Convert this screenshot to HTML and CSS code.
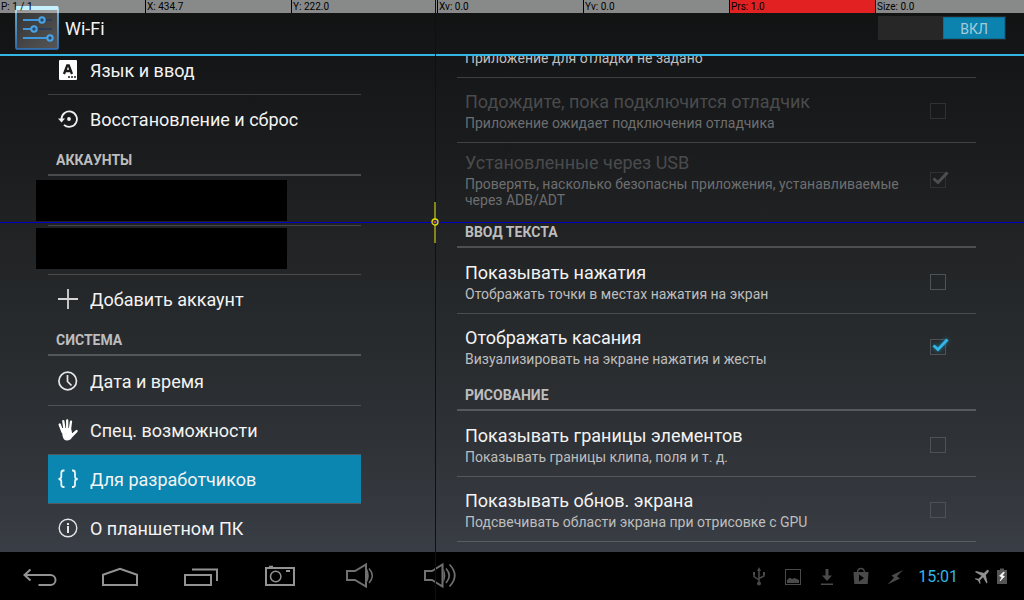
FILE: index.html
```html
<!DOCTYPE html>
<html lang="ru">
<head>
<meta charset="utf-8">
<meta name="viewport" content="width=device-width, initial-scale=1">
<title>Wi-Fi</title>
<link rel="stylesheet" href="styles.css">
</head>
<body>
<div class="screen">
  <header class="action-bar">
    <svg class="app-icon" viewBox="0 0 44 44" aria-hidden="true">
      <defs>
        <linearGradient id="tile" x1="0" y1="0" x2="1" y2="1"><stop offset="0" stop-color="#333"/><stop offset="1" stop-color="#565656"/></linearGradient>
        <linearGradient id="edge" x1="0" y1="0" x2="0" y2="1"><stop offset="0" stop-color="#7fd0f2"/><stop offset="1" stop-color="#2f78c4"/></linearGradient>
      </defs>
      <rect x="1" y="1" width="42" height="42" rx="1" fill="url(#tile)" stroke="url(#edge)" stroke-width="1.6"/>
      <path d="M1 2H43" stroke="#8be0ff" stroke-width="4"/>
      <g fill="none" stroke="#1f3d60" stroke-width="1.500"><path d="M30 14H37M22 23H37"/></g>
      <g fill="none" stroke="#3f97dc" stroke-width="1.900"><path d="M8 14H24M8 23H16M8 32H32"/></g>
      <g fill="#2a4a66" stroke="#4aa3e6" stroke-width="2"><circle cx="27" cy="14" r="2.700"/><circle cx="19" cy="23" r="2.700"/><circle cx="35" cy="32" r="2.700"/></g>
    </svg>
    <h1 class="action-bar__title">Wi-Fi</h1>
    <button class="switch" type="button" role="switch" aria-checked="true"><span class="switch__thumb">ВКЛ</span></button>
  </header>

  <main class="panes">
    <nav class="sidebar">
      <a class="nav-row" href="#language">
        <svg class="icon" viewBox="0 0 20 20"><rect x="1" y="0" width="18" height="20" rx="1" fill="#fff"/><path d="M6 14L9.200 5.500H10.800L14 14M7.500 11H12.500" fill="none" stroke="#1b1b1b" stroke-width="2.300"/><path d="M10 17H12M13 17H15M16 17H18" stroke="#1b1b1b" stroke-width="1.500"/></svg>
        <span class="nav-row__label">Язык и ввод</span></a>
      <a class="nav-row" href="#backup">
        <svg class="icon" viewBox="0 0 20 20"><path d="M3.500 10A7.700 7.700 0 1 1 6 15.800" fill="none" stroke="#f0f0f0" stroke-width="1.800"/><path d="M0 9.500H7L3.500 13.500Z" fill="#f0f0f0"/><circle cx="11" cy="10" r="1.900" fill="#f0f0f0"/></svg>
        <span class="nav-row__label">Восстановление и сброс</span></a>
      <h2 class="section">АККАУНТЫ</h2>
      <div class="nav-row nav-row--masked nav-row--first"><span class="mask"></span></div>
      <div class="nav-row nav-row--masked"><span class="mask"></span></div>
      <a class="nav-row" href="#add">
        <svg class="icon" viewBox="0 0 20 20"><path d="M10 0V20M0 10H20" stroke="#d5d5d5" stroke-width="1.800"/></svg>
        <span class="nav-row__label">Добавить аккаунт</span></a>
      <h2 class="section">СИСТЕМА</h2>
      <a class="nav-row nav-row--first" href="#date">
        <svg class="icon" viewBox="0 0 20 20"><circle cx="9.700" cy="10" r="8.800" fill="none" stroke="#e6e6e6" stroke-width="1.700"/><path d="M9.500 4V10.500L13.500 14.500" fill="none" stroke="#e6e6e6" stroke-width="1.700"/></svg>
        <span class="nav-row__label">Дата и время</span></a>
      <a class="nav-row" href="#accessibility">
        <svg class="icon icon--tall" viewBox="0 0 20 22"><g fill="none" stroke="#fff" stroke-width="2.300" stroke-linecap="round"><path d="M1.700 5.500L4.500 13M5.300 2.200L6.600 11M9.200 1.300V11M13 2.700L11.800 11M18.600 12L14 16"/></g><path d="M3.400 9H13L14.200 14.500L18 11.500L19.300 13L14 18.500Q12.500 21.500 9 21.500Q5.500 21.500 4.600 17Z" fill="#fff"/></svg>
        <span class="nav-row__label">Спец. возможности</span></a>
      <a class="nav-row nav-row--active" href="#developer" aria-current="page">
        <svg class="icon" viewBox="0 0 20 20"><g fill="none" stroke="#e8f4f8" stroke-width="1.800"><path d="M6.500 1.500H5.500Q3.300 1.500 3.300 4V7.500Q3.300 10 .5 10Q3.300 10 3.300 12.500V15.500Q3.300 18 5.500 18H6.500M14 1.500H15Q17 1.500 17 4V7.500Q17 10 19.700 10Q17 10 17 12.500V15.500Q17 18 15 18H14"/></g></svg>
        <span class="nav-row__label">Для разработчиков</span></a>
      <a class="nav-row" href="#about">
        <svg class="icon" viewBox="0 0 20 20"><circle cx="10" cy="10" r="8.800" fill="none" stroke="#e6e6e6" stroke-width="1.400"/><path d="M10 8V15M10 5V7" stroke="#e6e6e6" stroke-width="2"/></svg>
        <span class="nav-row__label">О планшетном ПК</span></a>
    </nav>

    <section class="settings">
      <div class="pref pref--cut"><span class="pref__summary">Приложение для отладки не задано</span></div>
      <label class="pref pref--disabled">
        <span class="pref__text"><span class="pref__title">Подождите, пока подключится отладчик</span><span class="pref__summary">Приложение ожидает подключения отладчика</span></span>
        <span class="tick"><input class="tick__box" type="checkbox" disabled></span></label>
      <label class="pref pref--disabled">
        <span class="pref__text"><span class="pref__title">Установленные через USB</span><span class="pref__summary">Проверять, насколько безопасны приложения, устанавливаемые через ADB/ADT</span></span>
        <span class="tick"><input class="tick__box" type="checkbox" checked disabled><svg class="tick__mark" viewBox="0 0 20 16"><path d="M3.500 6.500L8 10.500L17.500 .5"/></svg></span></label>
      <h2 class="section">ВВОД ТЕКСТА</h2>
      <label class="pref pref--first">
        <span class="pref__text"><span class="pref__title">Показывать нажатия</span><span class="pref__summary">Отображать точки в местах нажатия на экран</span></span>
        <span class="tick"><input class="tick__box" type="checkbox"></span></label>
      <label class="pref">
        <span class="pref__text"><span class="pref__title">Отображать касания</span><span class="pref__summary">Визуализировать на экране нажатия и жесты</span></span>
        <span class="tick"><input class="tick__box" type="checkbox" checked><svg class="tick__mark" viewBox="0 0 20 16"><path d="M3.500 6.500L8 10.500L17.500 .5"/></svg></span></label>
      <h2 class="section">РИСОВАНИЕ</h2>
      <label class="pref pref--first">
        <span class="pref__text"><span class="pref__title">Показывать границы элементов</span><span class="pref__summary">Показывать границы клипа, поля и т. д.</span></span>
        <span class="tick"><input class="tick__box" type="checkbox"></span></label>
      <label class="pref pref--last">
        <span class="pref__text"><span class="pref__title">Показывать обнов. экрана</span><span class="pref__summary">Подсвечивать области экрана при отрисовке с GPU</span></span>
        <span class="tick"><input class="tick__box" type="checkbox"></span></label>
    </section>
  </main>

  <footer class="system-bar">
    <button class="key" type="button" aria-label="Назад"><svg viewBox="0 0 40 32"><path d="M10.500 9.500L4.500 15L10.500 20.500M4.500 15H30.500a5 5 0 0 1 0 10H18.500"/></svg></button>
    <button class="key" type="button" aria-label="Домой"><svg viewBox="0 0 40 32"><path d="M3 25V14.800L20 8.800L37 14.800V25Z"/></svg></button>
    <button class="key" type="button" aria-label="Недавние"><svg viewBox="0 0 40 32"><path d="M5 15H31V25H5ZM12 9.500H37V21"/></svg></button>
    <button class="key" type="button" aria-label="Снимок экрана"><svg viewBox="0 0 40 32"><path d="M6 8H34V25H6Z"/><path d="M9 6.700H13M26 11H30"/><circle cx="15.700" cy="16.500" r="5.200" stroke-width="1.500"/></svg></button>
    <button class="key key--dim" type="button" aria-label="Тише"><svg viewBox="0 0 40 32"><path d="M7 11H15L26 4.500V26.500L15 20H7Z"/><path d="M27 8.500Q30.500 15.500 27 22.500Z" fill="#707070" stroke="none"/><path d="M29 8.500Q35.500 15.500 29 23" stroke-width="1.500"/></svg></button>
    <button class="key key--dim" type="button" aria-label="Громче"><svg viewBox="0 0 40 32"><path d="M5 11H12L22.500 4.500V26.500L12 20H5Z"/><path d="M23.500 8.500Q27 15.500 23.500 22.500Z" fill="#707070" stroke="none"/><path d="M26 8.500Q32.500 15.500 26 23M29.500 4.500Q40 15.500 29.500 26.500" stroke-width="1.700"/></svg></button>

    <div class="status">
      <svg viewBox="0 0 20 20" fill="none" stroke="#4a4a4a" stroke-width="1.500"><path d="M10 3V17M5 6V9.500L10 13M15 6V9L10 11.500"/><path d="M10 0L12 4H8ZM4 5H6V8H4ZM14 5H16V8H14Z" fill="#4a4a4a" stroke="none"/><circle cx="10" cy="16.500" r="2" fill="#4a4a4a" stroke="none"/></svg>
      <svg viewBox="0 0 20 20"><rect x="2.500" y="2.500" width="15" height="15" fill="none" stroke="#4a4a4a"/><path d="M4 16V13L7 10.500L9 12L11.500 11L16 13V16Z" fill="#4a4a4a"/></svg>
      <svg viewBox="0 0 20 20"><path d="M8.500 2H11.500V8.500H15L10 14L5 8.500H8.500ZM4 16.500H16V18H4Z" fill="#4a4a4a"/></svg>
      <svg viewBox="0 0 20 20"><path d="M2.500 5H17.500L16.700 17H3.300Z" fill="#4a4a4a"/><path d="M6.500 5Q7 1.500 10 1.500Q13 1.500 13.500 5" fill="none" stroke="#4a4a4a" stroke-width="1.300"/><path d="M8 7.500L13 11L8 14.500Z" fill="#000"/></svg>
      <svg viewBox="0 0 20 20"><path d="M18 3L6.500 8.500L9 10.700L2.500 17.500L15 11.500L12 9.300Z" fill="#4a4a4a"/></svg>
      <time class="status__clock">15:01</time>
      <svg viewBox="0 0 20 20"><path d="M16.500 3Q15.500 2.500 14.500 3.500L12 6L4 4L3 5L9.500 8.700L6.500 11.800L3.500 11.300L2.800 12L6 13.500L7.800 17L8.500 16.300L8 13.300L11 10.300L14.500 16.500L15.500 15.500L13.800 8L16.200 5.500Q17.200 4.300 16.500 3Z" fill="#8f8f8f"/></svg>
      <svg viewBox="0 0 20 20"><path d="M8 1.500H12V3H15V17H5V3H8Z" fill="#555"/><path d="M11.500 5L7.500 9L10 10L8 14L12.500 9.500L10.200 8.500L12.500 5.500Z" fill="#fff" stroke="#fff" stroke-width=".6"/></svg>
    </div>
  </footer>

  <div class="pointer">
    <div class="pointer__bar">
      <span>P: 1 / 1</span><span>X: 434.7</span><span>Y: 222.0</span><span>Xv: 0.0</span><span>Yv: 0.0</span><span class="pointer__pressure">Prs: 1.0</span><span>Size: 0.0</span>
    </div>
    <i class="pointer__x"></i>
    <i class="pointer__y"></i>
    <svg class="pointer__spot" viewBox="0 0 10 42"><path d="M5 1V42" stroke="#85851c" stroke-width="2"/><circle cx="5" cy="21" r="3" fill="#30305a" stroke="#e0e000" stroke-width="1.300"/><circle cx="5" cy="21" r="1" fill="#ff5050"/></svg>
  </div>
</div>
</body>
</html>
```

FILE: styles.css
```css
* { box-sizing: border-box; }

body {
  margin: 0;
  font-family: Roboto, "Noto Sans", sans-serif;
  color: #f3f3f3;
  background: #000;
}

.screen {
  position: relative;
  display: flex;
  flex-direction: column;
  height: 100vh;
  overflow: hidden;
  background: linear-gradient(#111212, #1c1d1f 28%, #26292b 52%, #2f3236 74%, #393d45 92%);
}

/* Action bar */
.action-bar {
  display: flex;
  align-items: center;
  flex: none;
  height: 56px;
  padding: 2px 18px 0 15px;
  border-bottom: 2px solid #33b5e5;
}
.app-icon { width: 44px; height: 44px; }
.action-bar__title {
  flex: 1;
  margin: 2px 0 0 6px;
  font-size: 18px;
  line-height: 24px;
  font-weight: 400;
}
.switch {
  display: flex;
  justify-content: flex-end;
  width: 128px;
  height: 24px;
  padding: 1px;
  border: 0;
  background: #272727;
  font: inherit;
}
.switch__thumb {
  width: 62px;
  border: 1px solid #0a6f94;
  background: #0b83ae;
  color: #a6cbd8;
  font-size: 14px;
  line-height: 22px;
  text-align: center;
}

/* Two panes */
.panes {
  display: flex;
  flex: 1;
  gap: 96px;
  min-height: 0;
  padding: 0 48px;
  overflow: hidden;
}
.sidebar { flex: 313 1 0; min-width: 0; margin-top: -11px; }
.settings { flex: 519 1 0; min-width: 0; margin-top: -6px; }

.section {
  height: 33px;
  margin: 0;
  padding: 6px 8px 0;
  border-bottom: 2px solid rgba(255, 255, 255, .2);
  color: #bdbdbd;
  font-size: 14px;
  line-height: 22px;
  font-weight: 700;
}

.nav-row {
  display: flex;
  align-items: center;
  gap: 12px;
  height: 49px;
  padding: 0 10px;
  border-top: 1px solid rgba(255, 255, 255, .17);
  color: inherit;
  font-size: 18px;
  line-height: 24px;
  text-decoration: none;
}
.nav-row__label { padding-top: 2px; }
.nav-row--active { background: #0b86b1; background-clip: padding-box; }
.nav-row--masked { align-items: flex-start; padding: 2px 0 0; }
.nav-row--first { border-top-color: transparent; }
.nav-row--masked.nav-row--first { padding-top: 3px; }
.mask { width: 251px; height: 41px; margin-left: -12px; background: #000; }
.icon { flex: none; width: 20px; height: 20px; }
.icon--tall { height: 22px; }

.pref {
  display: flex;
  align-items: center;
  min-height: 65px;
  padding: 8px 28px 7px 8px;
  border-top: 1px solid rgba(255, 255, 255, .17);
}
.pref--first { border-top-color: transparent; }
.pref--last { min-height: 66px; border-bottom: 1px solid rgba(255, 255, 255, .17); }
.pref--cut { min-height: 0; padding: 0 8px 11px; border-top: 0; }
.pref__text { flex: 1; min-width: 0; padding-right: 30px; }
.pref__title, .pref__summary { display: block; }
.pref__title { font-size: 18px; line-height: 24px; }
.pref__summary { color: #bebebe; font-size: 14px; line-height: 16px; }
.pref__title + .pref__summary { margin-top: 1px; }
.pref--disabled .pref__title { color: #4a4b4c; }
.pref--disabled .pref__summary { color: #6d6e6f; }

.tick { position: relative; display: flex; width: 18px; height: 16px; }
.tick__box {
  appearance: none;
  width: 16px;
  height: 16px;
  margin: 0;
  border: 1px solid #4f5254;
}
.tick__mark {
  position: absolute;
  top: 0;
  left: 0;
  width: 20px;
  height: 16px;
  overflow: visible;
  fill: none;
  stroke: #33b5e5;
  stroke-width: 3;
  filter: drop-shadow(0 0 2px #1680a8);
  pointer-events: none;
}
.pref--disabled .tick__box { border-color: #303132; }
.pref--disabled .tick__mark { stroke: #4d4e4f; filter: none; }

/* System bar */
.system-bar {
  display: flex;
  align-items: center;
  flex: none;
  height: 48px;
  background: #000;
}
.key {
  display: flex;
  align-items: center;
  justify-content: center;
  width: 80px;
  height: 48px;
  padding: 0;
  border: 0;
  background: none;
}
.key svg {
  width: 40px;
  height: 32px;
  fill: none;
  stroke: #939393;
  stroke-width: 2;
}
.key--dim svg { stroke: #707070; }
.status {
  display: flex;
  align-items: center;
  gap: 14px;
  margin-left: auto;
  padding: 2px 12px 0 0;
}
.status svg { width: 20px; height: 20px; }
.status__clock { margin-left: -1px; color: #33b5e5; font-size: 16px; line-height: 20px; }
.status__clock + svg { margin-right: -14px; }

/* Touch pointer overlay */
.pointer { position: absolute; inset: 0; pointer-events: none; }
.pointer__bar {
  display: grid;
  grid-template-columns: repeat(6, 146px) 1fr;
  height: 13px;
  color: #000;
  font-size: 10px;
  line-height: 13px;
}
.pointer__bar span {
  padding-left: 1px;
  border-right: 1px solid #000;
  background: rgba(255, 255, 255, .5);
  background-clip: padding-box;
}
.pointer__bar span:last-child { border-right: 0; }
.pointer__bar .pointer__pressure { background-color: #e22222; }
.pointer__x, .pointer__y { position: absolute; }
.pointer__x { top: 0; bottom: 0; left: 435px; width: 1px; background: #00008c; }
.pointer__y { left: 0; right: 0; top: 222px; height: 1px; background: #0000c8; }
.pointer__spot { position: absolute; left: 430px; top: 201px; width: 10px; height: 42px; }
```
